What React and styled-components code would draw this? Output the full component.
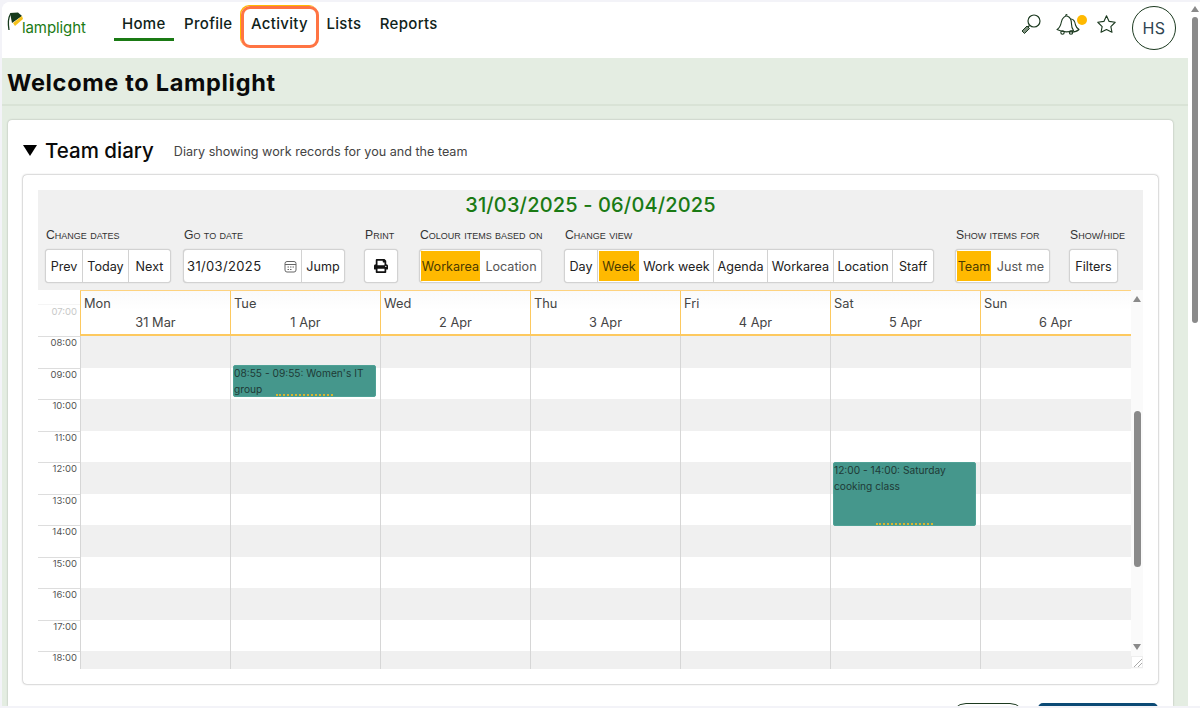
import React from 'react';
import styled, { createGlobalStyle } from 'styled-components';
import { FaPrint } from 'react-icons/fa';

const Global = createGlobalStyle`
  html, body { margin: 0; padding: 0; overflow: hidden; background: #f3f3f8; }
  * { box-sizing: border-box; }
`;

const font = `Inter, "Noto Sans", sans-serif`;

const Shell = styled.div`
  width: 1200px; height: 708px; padding: 2px 0 2px 2px; display: flex;
  background: #f3f3f8; font-family: ${font}; color: #111; overflow: hidden;
`;
const PageCol = styled.div`
  width: 1187px; display: flex; flex-direction: column; overflow: hidden;
  border-top-left-radius: 8px; background: #fff;
`;
const PageBar = styled.div`
  width: 11px; background: #fff; display: flex; flex-direction: column; align-items: center; padding: 4px 0 0 1px;
`;
const PageUp = styled.div`
  width: 0; height: 0; border-left: 4px solid transparent; border-right: 4px solid transparent; border-bottom: 6px solid #8a8a8a;
`;
const PageThumb = styled.div`
  width: 6px; height: 306px; margin-top: 5px; border-radius: 3px; background: #8a8a8a;
`;

const Nav = styled.nav`
  height: 56px; flex: none; display: flex; align-items: flex-start; background: #fff; position: relative;
`;
const Logo = styled.div`
  width: 112px; height: 40px; padding: 9px 0 0 3px; display: flex; align-items: flex-start; flex: none;
`;
const LogoText = styled.span`
  color: #1a7a14; font-size: 15px; font-weight: 400; margin: 7px 0 0 -3px; letter-spacing: -.1px;
`;
const NavList = styled.div`
  display: flex; gap: 2.5px; height: 40px;
`;
const NavItem = styled.div`
  position: relative; padding: 12px 8px 0; height: 39px; font-size: 15px; font-weight: 500; color: #10231a; letter-spacing: .3px;
  ${p => p.$active && `border-bottom: 3px solid #1a7a14;`}
  ${p => p.$spot && `
    &::after {
      content: ''; position: absolute; left: -2px; right: -3px; top: 4px; height: 36px;
      border: 3px solid #ff7443; border-radius: 9px; box-shadow: -1px -1px 0 #ffb900;
    }
  `}
`;
const NavRight = styled.div`
  margin-left: auto; display: flex; align-items: center; height: 44px; margin-top: 4px; padding-right: 13px;
`;
const IconSlot = styled.div`
  display: flex; margin-left: ${p => p.$gap}px; margin-top: -8px;
`;
const Avatar = styled.div`
  width: 44px; height: 44px; border-radius: 50%; border: 1.5px solid #1c3a20; margin-left: 15px;
  display: flex; align-items: center; justify-content: center; font-size: 16px; color: #2f4450; letter-spacing: .3px;
`;

const Content = styled.div`
  flex: 1; min-height: 0; margin-right: 1px; background: #e4ede2; display: flex; flex-direction: column;
`;
const Banner = styled.div`
  height: 48px; flex: none; border-bottom: 2px solid #d9e3d6; padding: 11px 0 0 5px;
`;
const Title = styled.h1`
  margin: 0; font-size: 23.5px; line-height: 28px; font-weight: 700; color: #0a0a0a; letter-spacing: .68px;
`;
const Card = styled.section`
  margin: 14px 15px 0 6px; background: #fff; border-radius: 4px 4px 0 0; flex: 1; min-height: 0;
  box-shadow: 0 0 2px rgba(0,0,0,.3); padding: 15px 15px 0; overflow: hidden;
`;
const CardHead = styled.div`
  display: flex; align-items: center; height: 30px; margin-bottom: 10px;
`;
const Triangle = styled.span`
  width: 0; height: 0; border-left: 7px solid transparent; border-right: 7px solid transparent; border-top: 11px solid #000; margin-right: 8px;
`;
const CardTitle = styled.h2`
  margin: 0; font-size: 20.5px; font-weight: 500; color: #0a0a0a; letter-spacing: 0;
`;
const CardDesc = styled.span`
  margin: 3px 0 0 20px; font-size: 12.6px; color: #444;
`;
const Panel = styled.div`
  height: 509px; border-radius: 4px; box-shadow: 0 0 2px rgba(0,0,0,.5); padding: 15px;
  background: #fff; display: flex; flex-direction: column;
`;
const Toolbar = styled.div`
  height: 100px; flex: none; background: #f0f0f0; padding: 3px 0 0 7px;
`;
const Range = styled.div`
  text-align: center; font-size: 20px; line-height: 24px; font-weight: 500; color: #1a7a14; letter-spacing: .15px; margin-left: -7px;
`;
const Groups = styled.div`
  display: flex; margin-top: 11px;
`;
const Group = styled.div`
  width: ${p => p.$w}px; margin-left: ${p => p.$gap || 0}px; flex: none; display: flex; flex-direction: column;
`;
const Label = styled.div`
  font-family: "Liberation Sans", sans-serif; font-size: 12.2px; font-variant: small-caps; line-height: 14px; color: #333; padding-left: 1px; white-space: nowrap; height: 16px; margin-bottom: 5px;
`;
const Seg = styled.div`
  display: flex; height: 34px; background: #fff; border: 1px solid #d2d2d2; border-radius: 4px; overflow: hidden; box-shadow: 0 0 1px rgba(0,0,0,.25);
`;
const SegBtn = styled.div`
  width: ${p => p.$w}px; flex: ${p => (p.$w ? 'none' : 1)}; display: flex; align-items: center; justify-content: center;
  font-size: 12.6px; color: ${p => (p.$muted ? '#555' : '#222')}; background: #fff;
  border-right: 1px solid #d2d2d2; white-space: nowrap;
  &:last-child { border-right: 0; }
  ${p => p.$on && `background: #ffb900; color: #4a3a00; border: 1px solid #fff; border-right: 1px solid #fff;`}
`;
const DateInput = styled.div`
  width: 118px; flex: none; display: flex; align-items: center; justify-content: space-between; padding: 0 4px 0 3px;
  font-size: 13px; color: #222; border-right: 1px solid #d2d2d2; letter-spacing: .35px;
`;

const Cal = styled.div`
  flex: 1; min-height: 0; display: flex; width: 1105px; overflow: hidden;
`;
const CalMain = styled.div`
  width: 1093px; display: flex; flex-direction: column; overflow: hidden;
`;
const Head = styled.div`
  display: flex; height: 46px; flex: none;
`;
const HeadGutter = styled.div`
  width: 42px; flex: none; padding-top: 14px;
`;
const FaintHour = styled.div`
  border-top: 1px solid #f5f5f5; text-align: right; padding-right: 3px; font-size: 9.5px; color: #c8c8c8; line-height: 12px; padding-top: 1px;
`;
const HeadDays = styled.div`
  flex: 1; display: flex; border-top: 1px solid #fdd27f; border-bottom: 2px solid #fdc95f;
  background: linear-gradient(#fafafa, #fff 45%);
`;
const HeadDay = styled.div`
  width: 150px; border-left: 1px solid #fdc95f; padding: 3px 3px 0; font-size: 12.8px; color: #444; line-height: 19px;
`;
const HeadDate = styled.div`
  text-align: center;
`;
const Row = styled.div`
  display: flex; height: 31.5px; flex: none;
`;
const Hour = styled.div`
  width: 42px; flex: none; border-top: 1px solid #ddd; text-align: right; padding: 0 3px 0 0; font-size: 9.5px; line-height: 12px; color: #555; background: #fff;
`;
const Cells = styled.div`
  flex: 1; display: flex; background: ${p => (p.$grey ? '#f0f0f0' : '#fff')};
`;
const Cell = styled.div`
  width: 150px; border-left: 1px solid #d6d6d6; position: relative;
`;
const Event = styled.div`
  position: absolute; z-index: 2; left: 2px; width: 143px; top: ${p => p.$top}px; height: ${p => p.$h}px;
  background: #45978c; border: 1px solid #4fa196; border-radius: 2px; padding: 0; color: #1f3a36; font-size: 10.2px; line-height: 15.5px;
  &::after {
    content: ''; position: absolute; left: 42px; width: 57px; bottom: 0; border-bottom: 2px dotted #d8b52f;
  }
`;
const Track = styled.div`
  width: 12px; flex: none; background: #fafafa; display: flex; flex-direction: column; align-items: center; padding-top: 6px; position: relative;
`;
const Up = styled.div`
  width: 0; height: 0; border-left: 4px solid transparent; border-right: 4px solid transparent; border-bottom: 6px solid #8a8a8a;
`;
const Thumb = styled.div`
  width: 7px; height: 156px; margin-top: 109px; border-radius: 4px; background: #8a8a8a;
`;
const Down = styled(Up)`
  border-bottom: 0; border-top: 6px solid #8a8a8a; margin-top: 77px;
`;
const Grip = styled.div`
  margin-top: 6px; width: 12px; height: 12px; background: #fff; border: 1px solid #eee; display: flex;
`;
const Foot = styled.div`
  display: flex; justify-content: flex-end; gap: 12px; margin-top: 19px;
`;
const GhostBtn = styled.div`
  width: 76px; height: 32px; border: 1.5px solid #1c3a20; border-radius: 18px; background: #fff;
`;
const PrimaryBtn = styled.div`
  width: 120px; height: 32px; border-radius: 5px; background: #0b4a75;
`;

const DS = '#1c3a20';
const LampLogo = () => (
  <svg width="20" height="28" viewBox="0 0 20 28" fill="none">
    <path d="M4 19 C3 13 3 7 5.5 3" stroke="#163a1c" strokeWidth="1.3" />
    <path d="M5 2 L13 1.5 L17 5 L7 12 Z" fill="#163a1c" />
    <path d="M17 5 L18 8 L10 15 L8 12 Z" fill="#f6c21c" />
  </svg>
);
const SearchIcon = () => (
  <svg width="22" height="22" viewBox="0 0 22 22" fill="none" stroke={DS} style={{ marginLeft: 1 }}>
    <circle cx="14" cy="8" r="6" strokeWidth="1.2" />
    <path d="M9.5 12.5 L8 14" strokeWidth="1.2" />
    <path d="M2 18 L7 13 L9.5 15.5 L4.5 20.5 Z" strokeWidth="1" fill="#7f917f" />
  </svg>
);
const BellsIcon = () => (
  <svg width="24" height="21" viewBox="0 0 24 21" fill="none" stroke={DS} strokeWidth="1.1" strokeLinejoin="round">
    <path d="M15 5 C18 5 19 8 19.5 11 C20 13 21.5 14.5 23 15.5 C21 17.5 17.5 18.3 14 18" fill="#fff" />
    <path d="M1 15.5 C4 14 4.8 11 5.5 7.5 C6.3 3.5 9.5 1.5 11.5 2.2 C14.5 3.2 15.5 7 15.5 10 C15.5 12.5 16.3 15 17.5 16.5 C12.5 18.5 6 18 1 15.5 Z" fill="#fff" />
    <path d="M9.5 1.8 L10.2 0.6 L11.4 1" />
    <circle cx="6.5" cy="18.5" r="1.7" />
    <circle cx="15" cy="18.6" r="1.7" />
  </svg>
);
const StarIcon = () => (
  <svg width="21" height="20" viewBox="0 0 24 23" fill="none" stroke={DS} strokeWidth="1.3" strokeLinejoin="round">
    <path d="M12 2 L15 8.5 L22 9.5 L17 14.5 L18.3 21 L12 17.8 L5.7 21 L7 14.5 L2 9.5 L9 8.5 Z" />
  </svg>
);
const CalIcon = () => (
  <svg width="13" height="13" viewBox="0 0 13 13" fill="none" stroke="#666" strokeWidth="1">
    <rect x="1" y="1.5" width="11" height="10.5" rx="2" />
    <path d="M1 4.5 H12" />
    <path d="M3.5 7 H5 M6 7 H7.5 M8.5 7 H10 M3.5 9.5 H5 M6 9.5 H7.5" />
  </svg>
);
const GripIcon = () => (
  <svg width="10" height="10" viewBox="0 0 10 10" stroke="#aaa" strokeWidth="1">
    <path d="M2 10 L10 2 M6 10 L10 6" />
  </svg>
);
const Dot = styled.span`
  width: 10px; height: 10px; border-radius: 50%; background: #ffb900; margin: 9px 0 0 -3px; flex: none; align-self: flex-start;
`;

const days = [['Mon', '31 Mar'], ['Tue', '1 Apr'], ['Wed', '2 Apr'], ['Thu', '3 Apr'], ['Fri', '4 Apr'], ['Sat', '5 Apr'], ['Sun', '6 Apr']];
const hours = ['08:00', '09:00', '10:00', '11:00', '12:00', '13:00', '14:00', '15:00', '16:00', '17:00', '18:00'];
const events = {
  '08:00-1': { top: 29, h: 32, text: "08:55 - 09:55: Women's IT group" },
  '12:00-5': { top: 0, h: 64, text: '12:00 - 14:00: Saturday cooking class' },
};

export default function App() {
  return (
    <Shell>
      <Global />
      <PageCol>
        <Nav>
          <Logo><LampLogo /><LogoText>lamplight</LogoText></Logo>
          <NavList>
            <NavItem $active>Home</NavItem>
            <NavItem>Profile</NavItem>
            <NavItem $spot>Activity</NavItem>
            <NavItem>Lists</NavItem>
            <NavItem>Reports</NavItem>
          </NavList>
          <NavRight>
            <IconSlot $gap={0}><SearchIcon /></IconSlot>
            <IconSlot $gap={14}><BellsIcon /></IconSlot>
            <Dot />
            <IconSlot $gap={9}><StarIcon /></IconSlot>
            <Avatar>HS</Avatar>
          </NavRight>
        </Nav>
        <Content>
          <Banner><Title>Welcome to Lamplight</Title></Banner>
          <Card>
            <CardHead>
              <Triangle />
              <CardTitle>Team diary</CardTitle>
              <CardDesc>Diary showing work records for you and the team</CardDesc>
            </CardHead>
            <Panel>
              <Toolbar>
                <Range>31/03/2025 - 06/04/2025</Range>
                <Groups>
                  <Group $w={126}>
                    <Label>Change dates</Label>
                    <Seg><SegBtn $w={37}>Prev</SegBtn><SegBtn $w={46}>Today</SegBtn><SegBtn>Next</SegBtn></Seg>
                  </Group>
                  <Group $w={162} $gap={12}>
                    <Label>Go to date</Label>
                    <Seg><DateInput>31/03/2025<CalIcon /></DateInput><SegBtn>Jump</SegBtn></Seg>
                  </Group>
                  <Group $w={34} $gap={19}>
                    <Label>Print</Label>
                    <Seg><SegBtn><FaPrint size={14} color="#111" /></SegBtn></Seg>
                  </Group>
                  <Group $w={123} $gap={21}>
                    <Label>Colour items based on</Label>
                    <Seg><SegBtn $w={61} $on>Workarea</SegBtn><SegBtn $muted>Location</SegBtn></Seg>
                  </Group>
                  <Group $w={370} $gap={22}>
                    <Label>Change view</Label>
                    <Seg>
                      <SegBtn $w={33}>Day</SegBtn><SegBtn $w={42} $on>Week</SegBtn><SegBtn $w={74}>Work week</SegBtn>
                      <SegBtn $w={54}>Agenda</SegBtn><SegBtn $w={66}>Workarea</SegBtn><SegBtn $w={59}>Location</SegBtn><SegBtn>Staff</SegBtn>
                    </Seg>
                  </Group>
                  <Group $w={95} $gap={21}>
                    <Label>Show items for</Label>
                    <Seg><SegBtn $w={36} $on>Team</SegBtn><SegBtn $muted>Just me</SegBtn></Seg>
                  </Group>
                  <Group $w={49} $gap={19}>
                    <Label>Show/hide</Label>
                    <Seg><SegBtn>Filters</SegBtn></Seg>
                  </Group>
                </Groups>
              </Toolbar>
              <Cal>
                <CalMain>
                  <Head>
                    <HeadGutter><FaintHour>07:00</FaintHour></HeadGutter>
                    <HeadDays>
                      {days.map(([d, date]) => (
                        <HeadDay key={d}>{d}<HeadDate>{date}</HeadDate></HeadDay>
                      ))}
                    </HeadDays>
                  </Head>
                  {hours.map((h, i) => (
                    <Row key={h}>
                      <Hour>{h}</Hour>
                      <Cells $grey={i % 2 === 0}>
                        {days.map(([d], c) => {
                          const ev = events[`${h}-${c}`];
                          return (
                            <Cell key={d}>
                              {ev && <Event $top={ev.top} $h={ev.h}>{ev.text}</Event>}
                            </Cell>
                          );
                        })}
                      </Cells>
                    </Row>
                  ))}
                </CalMain>
                <Track>
                  <Up />
                  <Thumb />
                  <Down />
                  <Grip><GripIcon /></Grip>
                </Track>
              </Cal>
            </Panel>
            <Foot><GhostBtn /><PrimaryBtn /></Foot>
          </Card>
        </Content>
      </PageCol>
      <PageBar><PageUp /><PageThumb /></PageBar>
    </Shell>
  );
}
